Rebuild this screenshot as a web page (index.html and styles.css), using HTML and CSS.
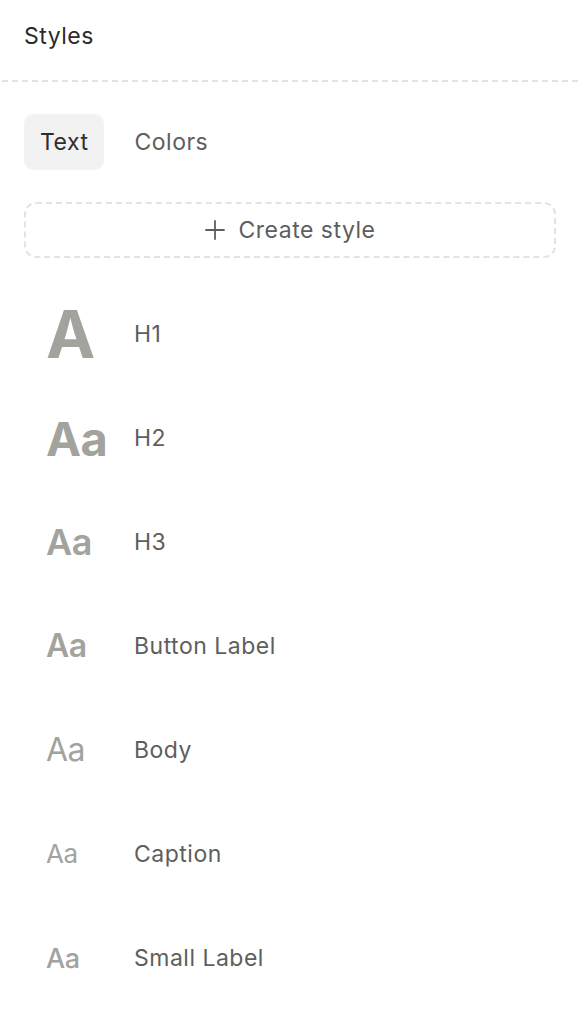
FILE: index.html
```html
<!DOCTYPE html>
<html lang="en">
<head>
  <meta charset="UTF-8">
  <meta name="viewport" content="width=device-width, initial-scale=1.0">
  <title>Styles</title>
  <link rel="stylesheet" href="styles.css">
</head>
<body>

<div class="panel">
  <div class="panel-header">Styles</div>
  <div class="divider"></div>

  <div class="tabs">
    <button class="tab active">Text</button>
    <button class="tab">Colors</button>
  </div>

  <button class="create-button">
    <svg class="plus-icon" width="20" height="20" viewBox="0 0 20 20">
      <path d="M10 1v18M1 10h18" stroke="#5e5e5e" stroke-width="1.8" stroke-linecap="round" fill="none"/>
    </svg>
    <span>Create style</span>
  </button>

  <div class="style-list">
    <div class="style-row">
      <div class="preview preview-h1">A</div>
      <div class="style-name">H1</div>
    </div>
    <div class="style-row">
      <div class="preview preview-h2">Aa</div>
      <div class="style-name">H2</div>
    </div>
    <div class="style-row">
      <div class="preview preview-h3">Aa</div>
      <div class="style-name">H3</div>
    </div>
    <div class="style-row">
      <div class="preview preview-button">Aa</div>
      <div class="style-name">Button Label</div>
    </div>
    <div class="style-row">
      <div class="preview preview-body">Aa</div>
      <div class="style-name">Body</div>
    </div>
    <div class="style-row">
      <div class="preview preview-caption">Aa</div>
      <div class="style-name">Caption</div>
    </div>
    <div class="style-row">
      <div class="preview preview-small">Aa</div>
      <div class="style-name">Small Label</div>
    </div>
  </div>
</div>

</body>
</html>
```

FILE: styles.css
```css
body {
  margin: 0;
  padding: 0;
  font-family: Inter, "Noto Sans", sans-serif;
  background: #ffffff;
  overflow: hidden;
}

.panel {
  width: 580px;
  height: 1012px;
  background: #ffffff;
}

/* Header */
.panel-header {
  height: 80px;
  display: flex;
  align-items: center;
  padding: 0 24px 8px;
  box-sizing: border-box;
  font-size: 23px;
  letter-spacing: 0.5px;
  color: #2b2b2b;
}

.divider {
  height: 2px;
  background: repeating-linear-gradient(to right, #e3e3e3 0 6px, transparent 6px 10px);
  background-position: 2px 0;
}

/* Tabs */
.tabs {
  display: flex;
  gap: 14px;
  padding: 32px 24px 0;
}

.tab {
  height: 56px;
  padding: 0 16px;
  border: none;
  border-radius: 10px;
  background: transparent;
  font-family: inherit;
  font-size: 23px;
  letter-spacing: 0.5px;
  color: #5e5e5e;
  cursor: pointer;
}

.tab.active {
  background: #f2f2f2;
  color: #2e2e2e;
}

/* Create button */
.create-button {
  display: flex;
  align-items: center;
  justify-content: center;
  gap: 14px;
  width: calc(100% - 48px);
  height: 56px;
  margin: 32px 24px 0;
  border: 2px dashed #e3e3e3;
  border-radius: 12px;
  background: #ffffff;
  font-family: inherit;
  font-size: 23px;
  letter-spacing: 0.5px;
  color: #5e5e5e;
  cursor: pointer;
}

.plus-icon {
  display: block;
}

/* Style rows */
.style-list {
  margin-top: 24px;
}

.style-row {
  display: flex;
  align-items: center;
  height: 104px;
  padding-left: 46px;
}

.preview {
  width: 88px;
  color: #a3a39e;
  line-height: 1;
  letter-spacing: -0.5px;
}

.preview-h1 {
  font-size: 66px;
  font-weight: 700;
}

.preview-h2 {
  font-size: 47px;
  font-weight: 700;
}

.preview-h3 {
  font-size: 36px;
  font-weight: 600;
}

.preview-button {
  font-size: 32px;
  font-weight: 600;
}

.preview-body {
  font-size: 32px;
  font-weight: 400;
}

.preview-caption {
  font-size: 26px;
  font-weight: 400;
}

.preview-small {
  font-size: 27px;
  font-weight: 500;
}

.style-name {
  font-size: 23px;
  letter-spacing: 0.5px;
  color: #5e5e5e;
}
```
